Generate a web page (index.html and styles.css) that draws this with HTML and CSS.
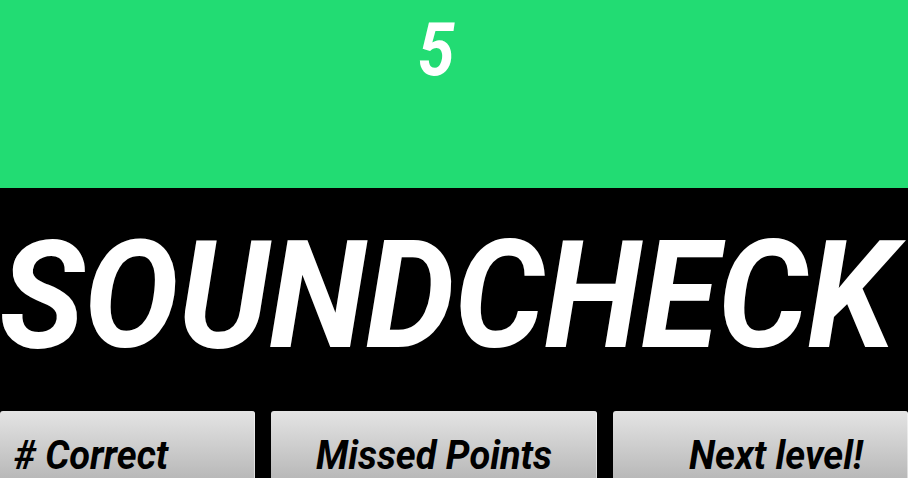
FILE: index.html
```html
<!DOCTYPE html>
<html>
<head>
<meta charset="utf-8">
<link rel="stylesheet" href="styles.css">
</head>
<body>
<div class="screen">
  <header class="score-bar">
    <div class="score">5</div>
  </header>
  <main class="stage">
    <h1 class="title">SOUNDCHECK</h1>
    <div class="buttons">
      <button class="btn btn-left"><span class="label">#&nbsp;Correct</span></button>
      <button class="btn btn-mid"><span class="label">Missed Points</span></button>
      <button class="btn btn-right"><span class="label">Next level!</span></button>
    </div>
  </main>
</div>
</body>
</html>
```
FILE: styles.css
```css
html, body {
  margin: 0;
  padding: 0;
  width: 908px;
  height: 478px;
  overflow: hidden;
  background: #000;
  font-family: Roboto, "Liberation Sans", sans-serif;
}
.screen {
  display: flex;
  flex-direction: column;
  width: 908px;
  height: 478px;
}
.score-bar {
  height: 188px;
  background: #22dc73;
  display: flex;
  justify-content: center;
  align-items: flex-start;
  flex-shrink: 0;
}
.score {
  color: #fff;
  font-weight: 700;
  font-style: italic;
  font-size: 66px;
  line-height: 1;
  margin-top: 13px;
  margin-right: 36px;
  transform: scaleY(1.13);
  transform-origin: 50% 0;
}
.stage {
  flex: 1;
  display: flex;
  flex-direction: column;
}
.title {
  margin: 40px 0 0 -14px;
  color: #fff;
  font-weight: 700;
  font-style: italic;
  font-size: 142px;
  line-height: 1;
  text-align: center;
  white-space: nowrap;
  letter-spacing: -0.5px;
  transform: scaleY(1.06);
  transform-origin: 50% 84%;
}
.buttons {
  margin-top: 41px;
  display: grid;
  grid-template-columns: 255px 326px 1fr;
  column-gap: 16px;
}
.btn {
  height: 68px;
  border: none;
  border-radius: 3px 3px 0 0;
  background: linear-gradient(#e4e4e4, #b8b8b8);
  font-family: Roboto, "Liberation Sans", sans-serif;
  font-weight: 700;
  font-style: italic;
  font-size: 38px;
  color: #000;
  padding: 26px 0 0 0;
  display: flex;
  align-items: flex-start;
  box-sizing: border-box;
  box-shadow: inset -1px 0 0 rgba(255,255,255,0.5);
}
.label {
  display: block;
  line-height: 1;
  white-space: nowrap;
  transform: scaleY(1.06);
  transform-origin: 50% 84%;
}
.btn-left { justify-content: flex-start; padding-left: 14px; }
.btn-mid { justify-content: center; }
.btn-right { justify-content: flex-start; padding-left: 76px; }
```
